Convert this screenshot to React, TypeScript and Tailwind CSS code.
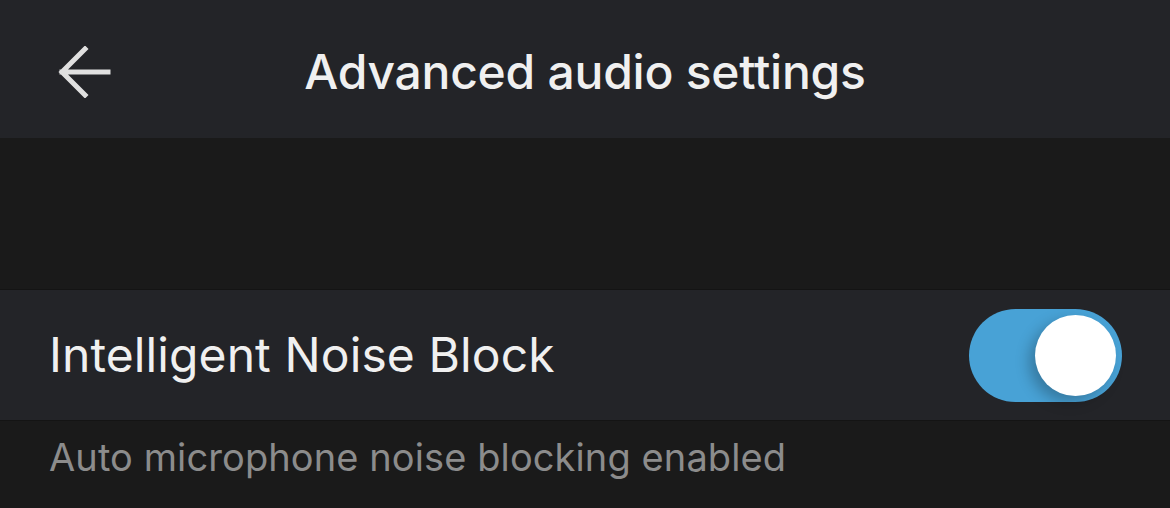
export default function App() {
  return (
    <div className="w-[1170px] h-[508px] bg-[#1a1a1a] overflow-hidden" style={{ fontFamily: "Inter, 'Noto Sans', sans-serif" }}>
      {/* Header */}
      <div className="relative h-[138px] bg-[#232428] flex items-center justify-center">
        <svg className="absolute left-[58px] top-[46px]" width="54" height="52" viewBox="0 0 54 52">
          <path d="M4 26 H50 M27 3 L4 26 L27 49" fill="none" stroke="#e0e0e0" strokeWidth="5" strokeLinecap="square" />
        </svg>
        <h1 className="text-[48px] font-medium text-[#f0f0f0] tracking-[-0.25px] mt-[6px]">Advanced audio settings</h1>
      </div>

      <div className="h-[151px]" />

      {/* Toggle row */}
      <div className="h-[132px] bg-[#232428] border-y border-[#141414] flex items-center justify-between pl-[49px] pr-[48px]">
        <span className="text-[48px] text-[#f0f0f0] tracking-[0.1px]">Intelligent Noise Block</span>
        <div className="w-[153px] h-[93px] rounded-full bg-[#48a2d6] flex items-center justify-end pr-[6px]">
          <div className="w-[81px] h-[81px] rounded-full bg-white shadow-[-6px_6px_14px_rgba(0,0,0,0.25)]" />
        </div>
      </div>

      {/* Footer text */}
      <div className="pl-[49px] pt-[8px]">
        <p className="text-[38px] text-[#8c8c8c] tracking-[0.1px]">Auto microphone noise blocking enabled</p>
      </div>
    </div>
  );
}
